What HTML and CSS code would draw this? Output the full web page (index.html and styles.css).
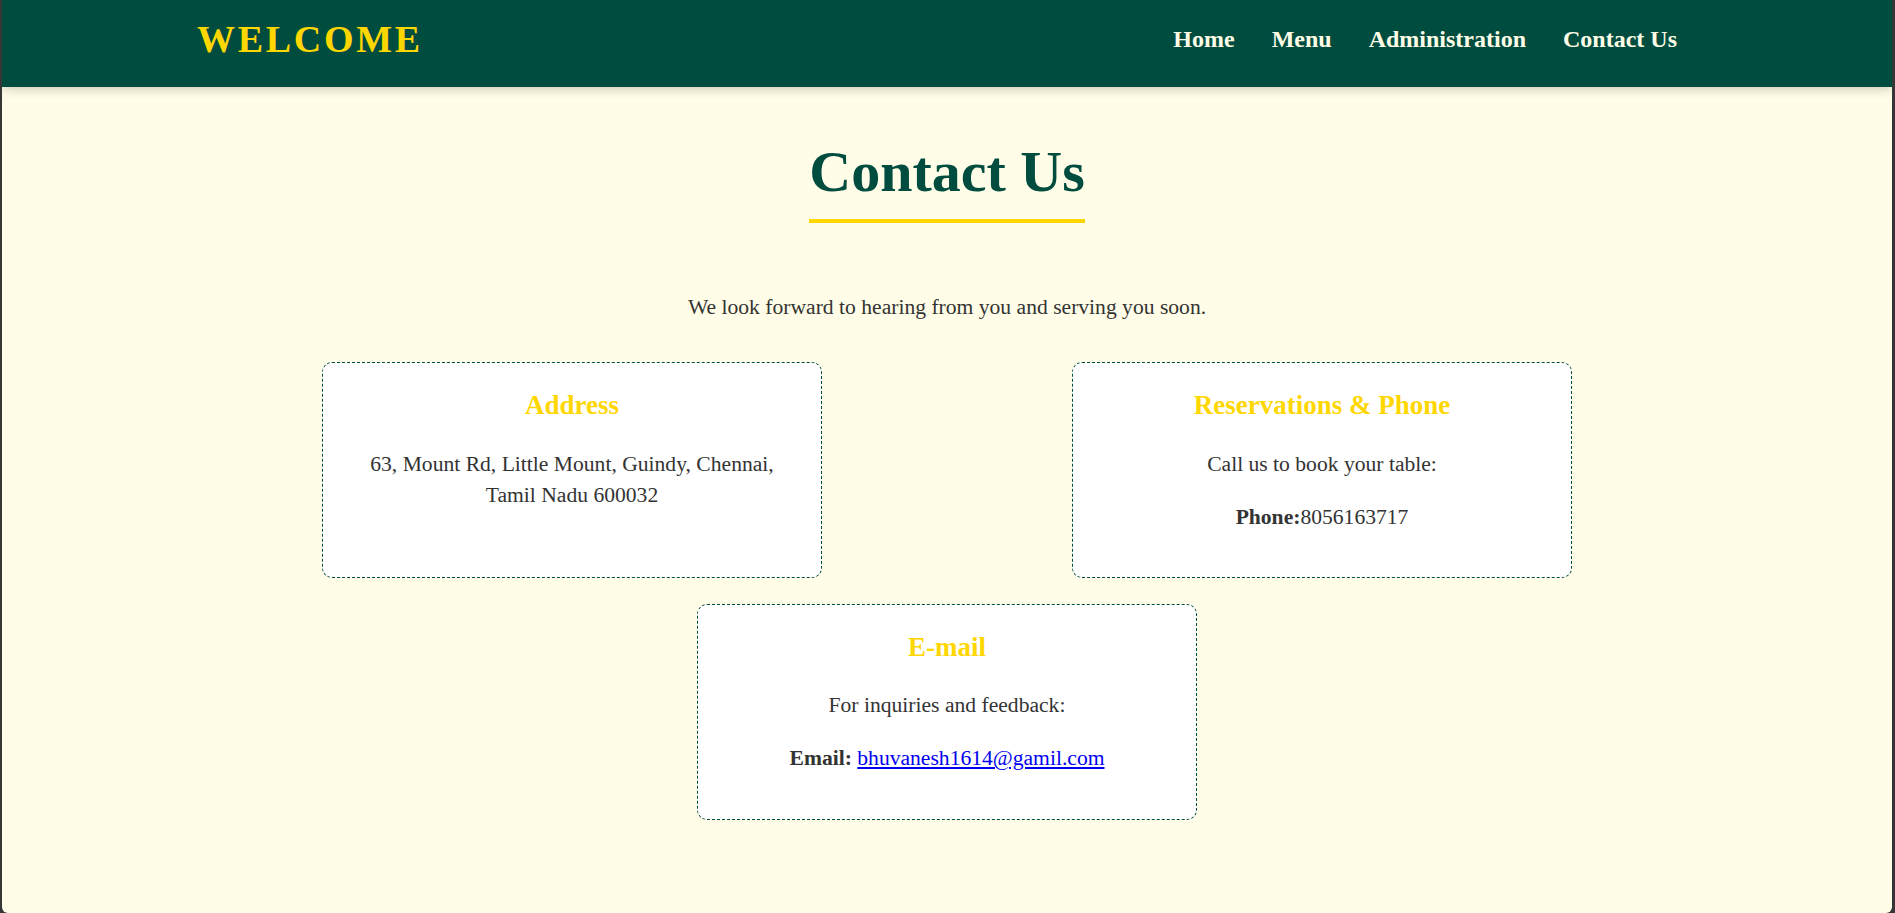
FILE: index.html
```html
<!DOCTYPE html>
<html lang="en">
<head>
<meta charset="utf-8">
<title>Contact Us</title>
<link rel="stylesheet" href="styles.css">
</head>
<body>
<div class="window">
  <header class="site-header">
    <div class="header-inner">
      <div class="logo">WELCOME</div>
      <nav>
        <ul class="nav-list">
          <li><a href="#">Home</a></li>
          <li><a href="#">Menu</a></li>
          <li><a href="#">Administration</a></li>
          <li><a href="#">Contact Us</a></li>
        </ul>
      </nav>
    </div>
  </header>
  <main class="contact">
    <div class="heading-wrap">
      <h1 class="page-title">Contact Us</h1>
    </div>
    <p class="intro">We look forward to hearing from you and serving you soon.</p>
    <div class="cards">
      <section class="card">
        <h3 class="card-title">Address</h3>
        <p class="card-text">63, Mount Rd, Little Mount, Guindy, Chennai, Tamil Nadu 600032</p>
      </section>
      <section class="card">
        <h3 class="card-title">Reservations &amp; Phone</h3>
        <p class="card-text">Call us to book your table:</p>
        <p class="card-text"><strong>Phone:</strong>8056163717</p>
      </section>
      <section class="card">
        <h3 class="card-title">E-mail</h3>
        <p class="card-text">For inquiries and feedback:</p>
        <p class="card-text"><strong>Email:</strong> <a class="mail-link" href="#">bhuvanesh1614@gamil.com</a></p>
      </section>
    </div>
  </main>
</div>
</body>
</html>
```

FILE: styles.css
```css
html, body {
  margin: 0;
  padding: 0;
  height: 100%;
}

body {
  background: #363636;
  font-family: "Liberation Serif", "Times New Roman", serif;
}

.window {
  margin: 0 3px 0 2px;
  height: 100vh;
  background: #fffde7;
  border-radius: 0 0 6px 6px;
  overflow: hidden;
}

.site-header {
  background: #004d40;
  height: 87px;
  box-shadow: 0 2px 10px rgba(0, 0, 0, 0.2);
}

.header-inner {
  width: 1500px;
  margin: 0 auto;
  height: 87px;
  box-sizing: border-box;
  padding-bottom: 9px;
  display: flex;
  align-items: center;
  justify-content: space-between;
}

.logo {
  color: #ffd700;
  font-size: 38px;
  font-weight: bold;
  letter-spacing: 2.7px;
}

.nav-list {
  list-style: none;
  margin: 0;
  padding: 0 20px 0 0;
  display: flex;
  gap: 37px;
}

.nav-list a {
  color: #fffde7;
  text-decoration: none;
  font-weight: bold;
  font-size: 24px;
}

.contact {
  padding-top: 52px;
  text-align: center;
}

.heading-wrap {
  display: flex;
  justify-content: center;
}

.page-title {
  margin: 0;
  font-size: 58px;
  line-height: 66px;
  color: #004d40;
  padding-bottom: 14px;
  border-bottom: 4px solid #ffd700;
}

.intro {
  margin: 68px 0 26px;
  font-size: 21.6px;
  line-height: 32px;
  color: #333;
}

.cards {
  width: 1500px;
  margin: 0 auto;
  display: flex;
  flex-wrap: wrap;
  justify-content: space-around;
}

.card {
  flex: 0 0 500px;
  margin: 13px;
  box-sizing: border-box;
  background: #fff;
  border: 1px dashed #004d40;
  border-radius: 10px;
  padding: 20px 25px 22px;
  color: #333;
}

.card-title {
  font-size: 27px;
  line-height: 31px;
  margin: 7px 0 27.6px;
  color: #ffd700;
}

.card-text {
  font-size: 21.6px;
  line-height: 31.5px;
  margin: 21.6px 0;
}

.mail-link {
  color: #0000ee;
}
```
